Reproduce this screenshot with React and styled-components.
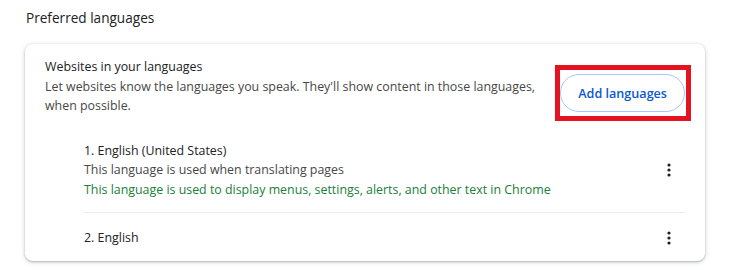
import React from 'react';
import styled, { createGlobalStyle } from 'styled-components';

const GlobalStyle = createGlobalStyle`
  body {
    margin: 0;
    background: #ffffff;
    font-family: 'Open Sans', 'Noto Sans', sans-serif;
    color: #202124;
  }
`;

const Page = styled.div`
  width: 731px;
  height: 270px;
  padding: 8px 26px 0 25px;
  box-sizing: border-box;
`;

const SectionTitle = styled.h2`
  margin: 0 0 0 1px;
  font-size: 13.6px;
  font-weight: 400;
  line-height: 20px;
  color: #202124;
`;

const Card = styled.div`
  margin-top: 16px;
  background: #fff;
  border-radius: 8px;
  box-shadow: 0 1px 2px rgba(60, 64, 67, 0.3), 0 1px 4px 1px rgba(60, 64, 67, 0.15);
  padding: 0 20px;
`;

const TopRow = styled.div`
  display: flex;
  justify-content: space-between;
  padding: 13px 0 15px;
`;

const TextBlock = styled.div`
  display: flex;
  flex-direction: column;
  max-width: 500px;
`;

const Line = styled.div`
  font-size: 12.4px;
  line-height: 19.5px;
  color: ${p => (p.green ? '#188038' : p.muted ? '#474747' : '#202124')};
`;

const AddButton = styled.button`
  position: relative;
  align-self: flex-start;
  height: 38px;
  margin-top: 17px;
  padding: 0 17px;
  border: 1px solid #a8c7fa;
  border-radius: 19px;
  background: #fff;
  color: #0b57d0;
  font-family: inherit;
  font-size: 12.6px;
  font-weight: 600;
  cursor: pointer;

  &::after {
    content: '';
    position: absolute;
    top: -10px;
    bottom: -10px;
    left: -6px;
    right: -7px;
    border: 5px solid #e3141f;
    pointer-events: none;
  }
`;

const List = styled.div`
  margin-left: 39px;
`;

const Item = styled.div`
  display: flex;
  align-items: center;
  justify-content: space-between;
  padding: ${p => (p.last ? '9px 0 7px' : '10px 0 13px')};
  border-top: ${p => (p.last ? '1px solid #e8eaed' : 'none')};
`;

const MenuButton = styled.button`
  width: 32px;
  height: 32px;
  border: none;
  background: none;
  display: flex;
  align-items: center;
  justify-content: center;
  padding: 0;
  cursor: pointer;
`;

const Kebab = () => (
  <svg width="4" height="14" viewBox="0 0 4 14">
    <circle cx="2" cy="2" r="1.6" fill="#202124" />
    <circle cx="2" cy="7" r="1.6" fill="#202124" />
    <circle cx="2" cy="12" r="1.6" fill="#202124" />
  </svg>
);

export default function App() {
  return (
    <>
      <GlobalStyle />
      <Page>
        <SectionTitle>Preferred languages</SectionTitle>
        <Card>
          <TopRow>
            <TextBlock>
              <Line>Websites in your languages</Line>
              <Line muted>
                Let websites know the languages you speak. They'll show content in those languages,
                when possible.
              </Line>
            </TextBlock>
            <AddButton>Add languages</AddButton>
          </TopRow>
          <List>
            <Item>
              <TextBlock>
                <Line>1. English (United States)</Line>
                <Line muted>This language is used when translating pages</Line>
                <Line green>This language is used to display menus, settings, alerts, and other text in Chrome</Line>
              </TextBlock>
              <MenuButton><Kebab /></MenuButton>
            </Item>
            <Item last>
              <Line>2. English</Line>
              <MenuButton><Kebab /></MenuButton>
            </Item>
          </List>
        </Card>
      </Page>
    </>
  );
}
